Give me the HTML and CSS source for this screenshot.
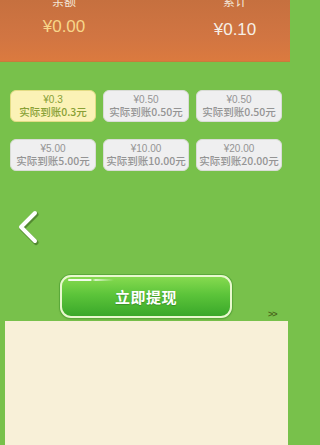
FILE: index.html
```html
<!DOCTYPE html>
<html lang="zh-CN">
<head>
<meta charset="utf-8">
<title>提现</title>
<link rel="stylesheet" href="styles.css">
</head>
<body>
<div class="page">
  <header class="summary">
    <div class="stat">
      <div class="stat-label">余额</div>
      <div class="stat-value gold">¥0.00</div>
    </div>
    <div class="stat stat-right">
      <div class="stat-label">累计</div>
      <div class="stat-value">¥0.10</div>
    </div>
  </header>

  <section class="options">
    <div class="opt active"><div class="amt">¥0.3</div><div class="real">实际到账0.3元</div></div>
    <div class="opt"><div class="amt">¥0.50</div><div class="real">实际到账0.50元</div></div>
    <div class="opt"><div class="amt">¥0.50</div><div class="real">实际到账0.50元</div></div>
    <div class="opt"><div class="amt">¥5.00</div><div class="real">实际到账5.00元</div></div>
    <div class="opt"><div class="amt">¥10.00</div><div class="real">实际到账10.00元</div></div>
    <div class="opt"><div class="amt">¥20.00</div><div class="real">实际到账20.00元</div></div>
  </section>

  <div class="back">
    <svg width="26" height="38" viewBox="0 0 26 38">
      <path d="M20 5 L6 19 L20 33" fill="none" stroke="rgba(40,70,20,0.45)" stroke-width="5" stroke-linecap="round" stroke-linejoin="round" transform="translate(1,1.5)"/>
      <path d="M20 5 L6 19 L20 33" fill="none" stroke="#ffffff" stroke-width="4" stroke-linecap="round" stroke-linejoin="round"/>
    </svg>
  </div>

  <div class="action-row">
    <button class="withdraw"><span class="shine"></span>立即提现</button>
    <span class="more">&gt;&gt;</span>
  </div>

  <div class="panel"></div>
</div>
</body>
</html>
```
FILE: styles.css
```css
html, body {
  margin: 0;
  padding: 0;
}
html {
  background: #78c14b;
}
body {
  width: 290px;
  height: 445px;
  overflow: hidden;
  background: #78c14b;
  font-family: "Liberation Sans", "Noto Sans CJK SC", sans-serif;
}
.page {
  display: flex;
  flex-direction: column;
  height: 445px;
}
.summary {
  height: 62px;
  flex: none;
  background: linear-gradient(180deg, #c6703f 0%, #d17542 60%, #db7a3f 100%);
  display: flex;
  justify-content: space-between;
  padding: 0 15px 0 24px;
  box-sizing: border-box;
  border-bottom: 1px solid #c97b3c;
}
.stat {
  width: 80px;
  display: flex;
  flex-direction: column;
  align-items: center;
}
.stat-label {
  font-family: "Noto Sans CJK SC", sans-serif;
  font-size: 12px;
  line-height: 12px;
  margin-top: -5px;
  color: #f4e6d6;
}
.stat-value {
  font-size: 17px;
  line-height: 20px;
  margin-top: 10px;
  color: #f6efe6;
}
.stat-value.gold {
  color: #f7d68a;
}
.stat-right .stat-value {
  margin-top: 13px;
}
.options {
  display: grid;
  grid-template-columns: repeat(3, 86px);
  column-gap: 7px;
  row-gap: 17px;
  padding: 28px 0 0 10px;
}
.opt {
  height: 32px;
  box-sizing: border-box;
  border-radius: 6px;
  background: #efeff0;
  border: 1px solid #d9dcd6;
  color: #949494;
  display: flex;
  flex-direction: column;
  align-items: center;
  justify-content: center;
  font-family: "Noto Sans CJK SC", sans-serif;
  font-size: 10.5px;
  font-weight: 500;
  line-height: 12px;
}
.opt.active {
  background: #fbf2b6;
  border-color: #e2dc84;
  color: #88a035;
}
.opt .amt {
  font-family: "Liberation Sans", "Noto Sans CJK SC", sans-serif;
  font-size: 10px;
}
.back {
  margin: 37px 0 0 15px;
  height: 38px;
}
.back svg {
  display: block;
}
.action-row {
  display: flex;
  align-items: flex-end;
  margin-top: 29px;
}
.withdraw {
  position: relative;
  margin-left: 60px;
  width: 172px;
  height: 43px;
  box-sizing: border-box;
  border-radius: 11px;
  border: 2px solid #e9f8cf;
  box-shadow: 0 0 0 1px #5aa93a, 0 1px 2px rgba(40, 80, 20, 0.35);
  background: linear-gradient(180deg, #86da4f 0%, #5cc43a 45%, #3aa82a 100%);
  color: #ffffff;
  font-family: "Noto Sans CJK SC", sans-serif;
  font-size: 15px;
  font-weight: bold;
  letter-spacing: 0.5px;
  padding: 0;
  text-shadow: 0 1px 1px rgba(30, 90, 20, 0.4);
}
.shine {
  position: absolute;
  left: 6px;
  top: 2px;
  width: 46px;
  height: 2px;
  border-radius: 2px;
  background: linear-gradient(90deg, rgba(255,255,255,0.9) 0%, rgba(255,255,255,0.9) 50%, rgba(255,255,255,0) 52%, rgba(255,255,255,0.7) 60%, rgba(255,255,255,0) 100%);
}
.more {
  margin-left: 36px;
  margin-bottom: -1px;
  font-size: 9px;
  font-weight: bold;
  line-height: 10px;
  color: #4c6a1c;
  letter-spacing: -1px;
}
.panel {
  flex: 1;
  margin: 3px 2px 0 5px;
  background: #f8f0d8;
}
```
